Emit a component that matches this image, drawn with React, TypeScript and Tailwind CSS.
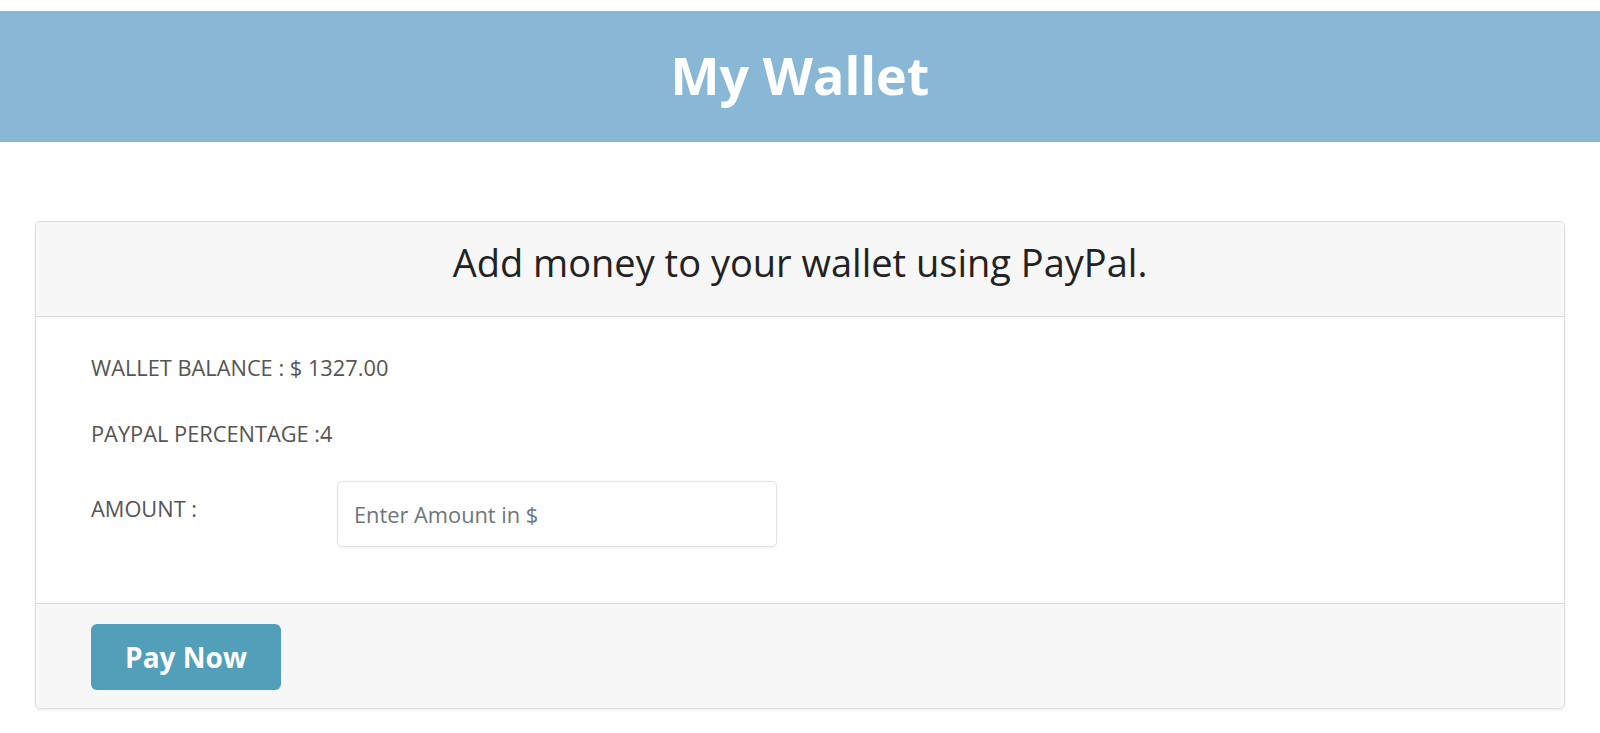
import { useState } from "react";

export default function App() {
  const [amount, setAmount] = useState("");

  const balance = "1327.00";
  const paypalPercentage = 4;

  return (
    <div className="min-h-screen bg-white font-['Open_Sans',sans-serif]">
      <header className="mt-[11px] flex h-[131px] items-center justify-center bg-[#89b8d7] pb-[3px]">
        <h1 className="text-[52px] font-bold leading-[1.362] text-white">My Wallet</h1>
      </header>

      <div className="mx-[35px] mt-[79px] rounded-[5px] border border-[#dedede] shadow-[0_1px_3px_rgba(0,0,0,0.08)]">
        <div className="h-[95px] rounded-t-[5px] border-b border-[#dcdcdc] bg-[#f7f7f7] pt-[14px] text-center">
          <h2 className="text-[38px] leading-[52px] text-[#222]">Add money to your wallet using PayPal.</h2>
        </div>

        <div className="bg-white px-[55px] pb-[56px] pt-[36px] text-[21.8px] leading-[30px] text-[#555]">
          <p>WALLET BALANCE : $ {balance}</p>
          <p className="mt-[36px]">PAYPAL PERCENTAGE :{paypalPercentage}</p>
          <div className="mt-[32px] flex items-start">
            <label htmlFor="amount" className="w-[246px] pt-[13px]">
              AMOUNT :
            </label>
            <input
              id="amount"
              type="text"
              value={amount}
              onChange={(e) => setAmount(e.target.value)}
              placeholder="Enter Amount in $"
              className="h-[66px] w-[440px] rounded-[5px] border border-[#e3e3e3] bg-white px-[16px] text-[21.8px] text-[#555] shadow-[0_1px_3px_rgba(0,0,0,0.06)] outline-none placeholder:text-[#6c757d]"
            />
          </div>
        </div>

        <div className="rounded-b-[5px] border-t border-[#dcdcdc] bg-[#f7f7f7] px-[55px] pb-[18px] pt-[20px]">
          <button className="h-[66px] w-[190px] rounded-[6px] bg-[#529fba] text-[28px] font-bold text-white">
            Pay Now
          </button>
        </div>
      </div>
    </div>
  );
}
